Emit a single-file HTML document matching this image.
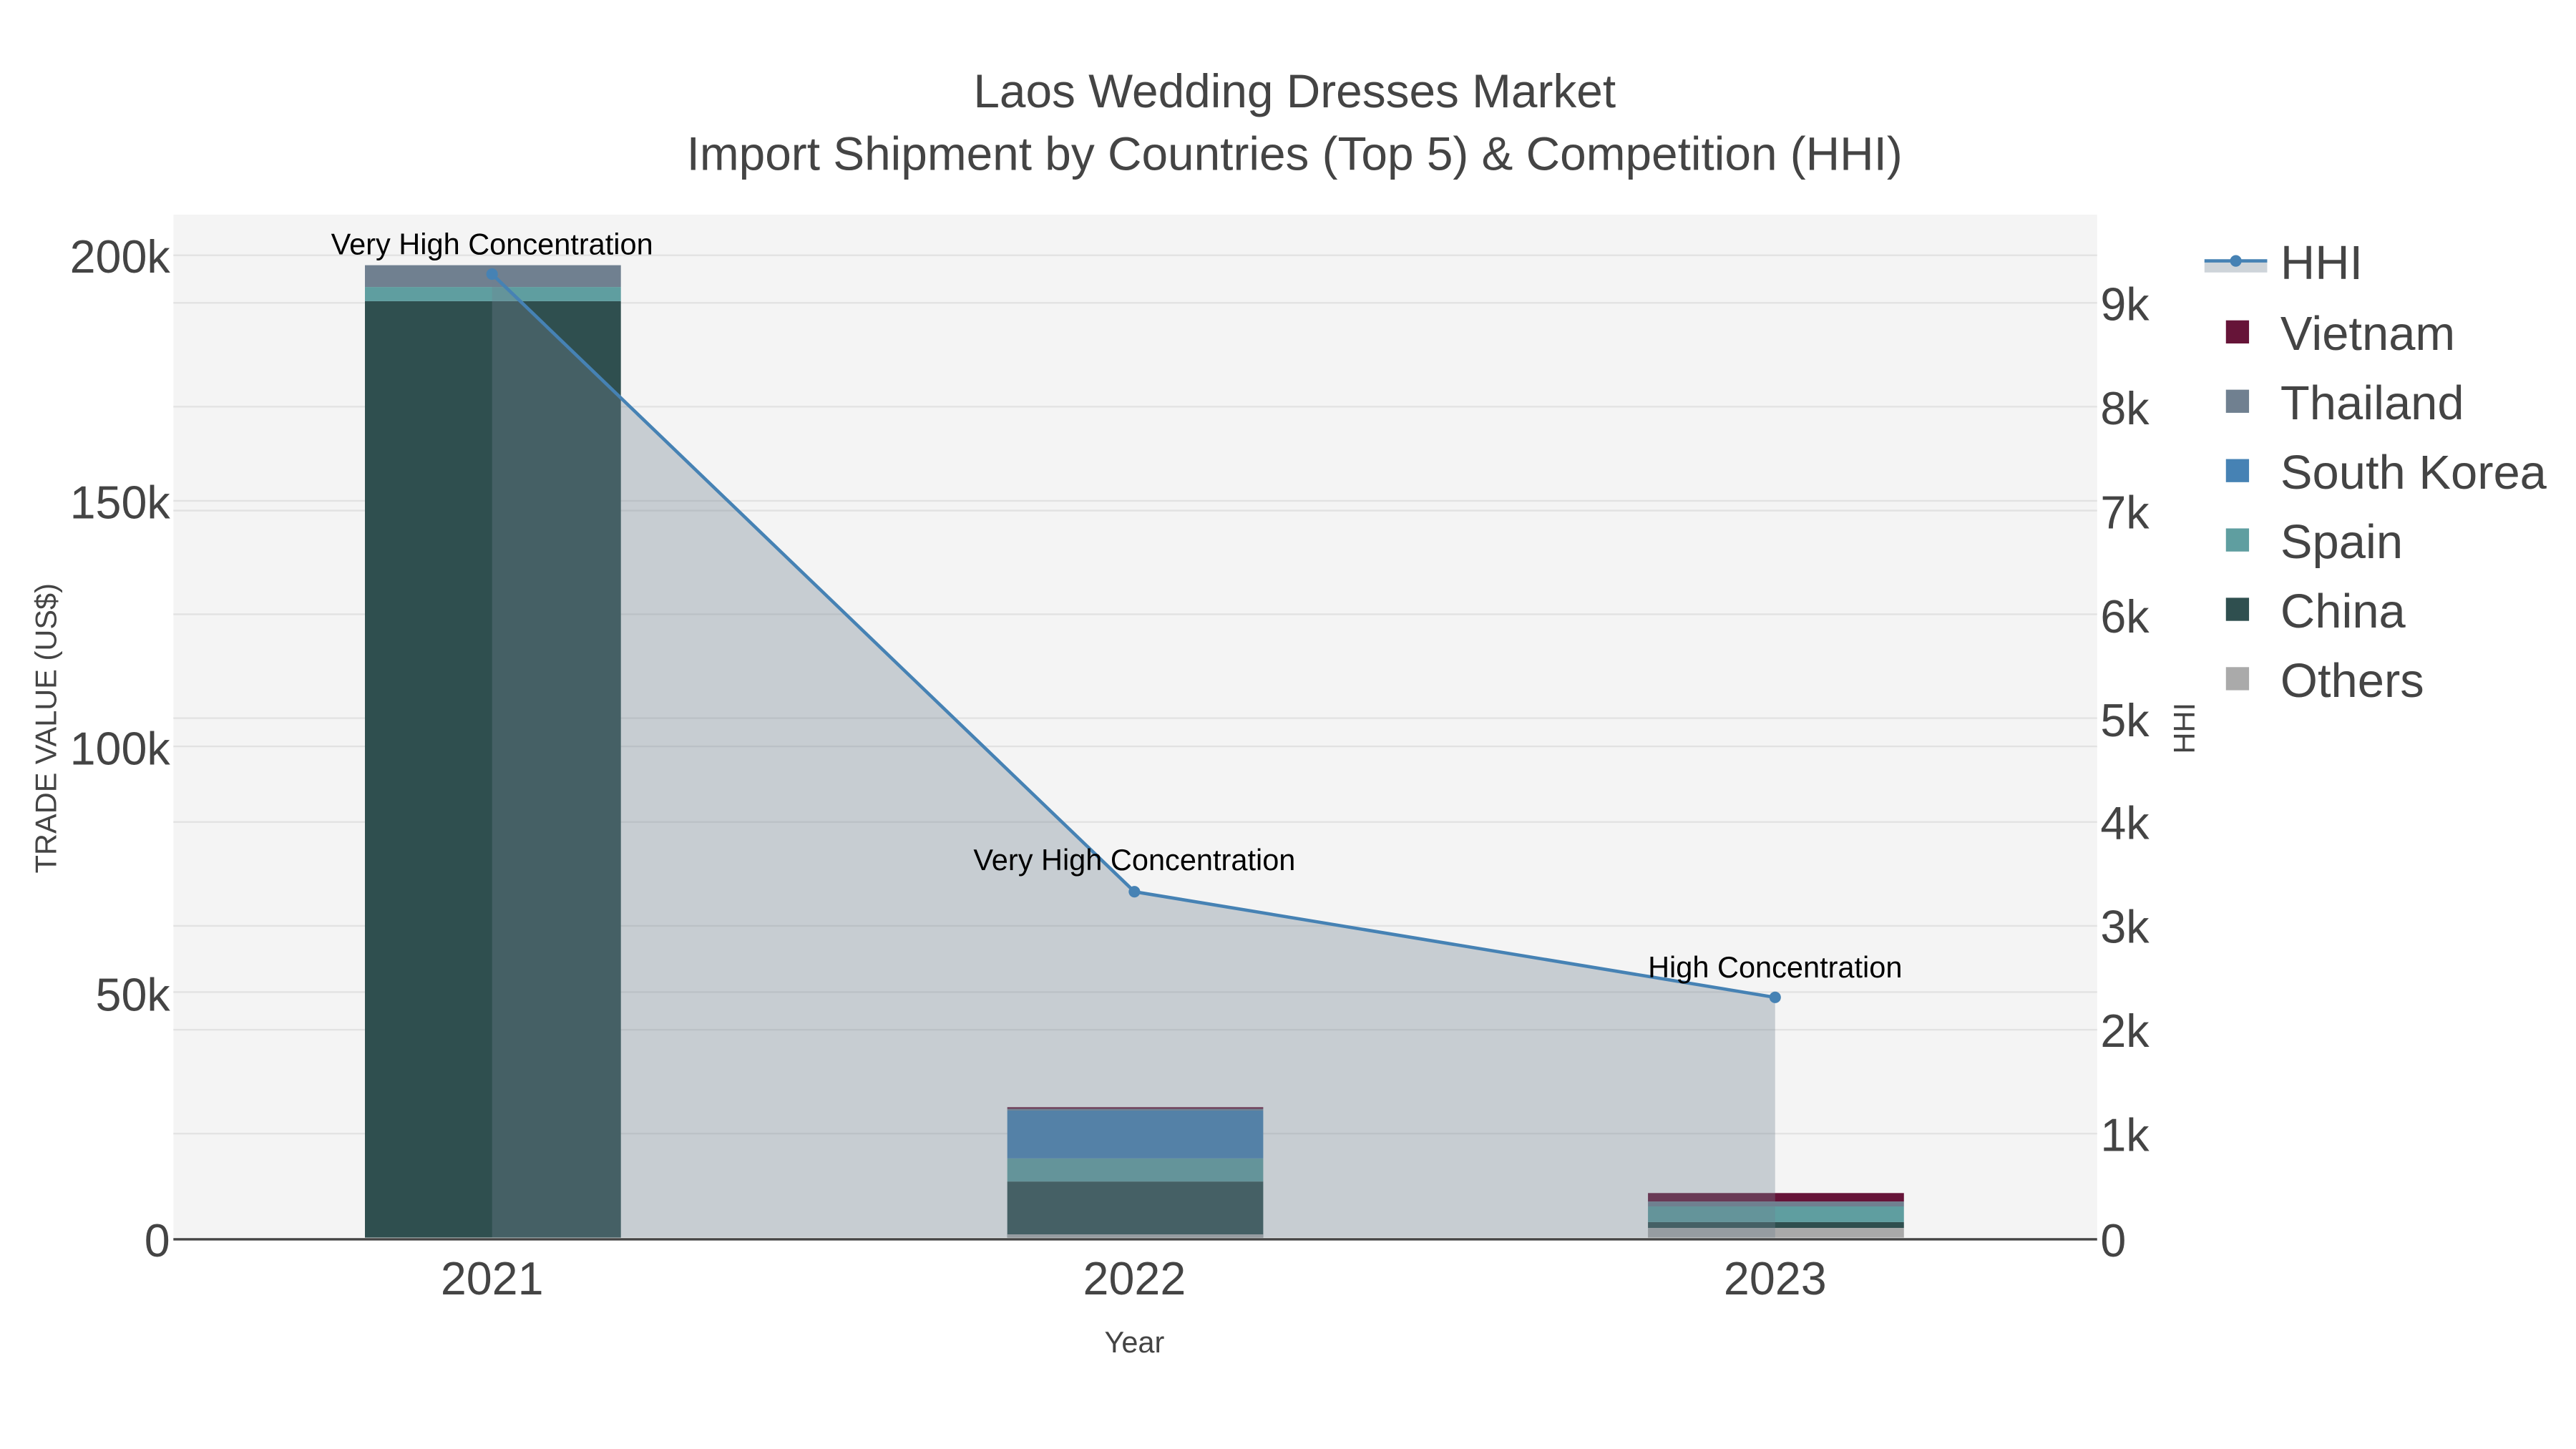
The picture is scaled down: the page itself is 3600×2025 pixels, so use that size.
<!DOCTYPE html>
<html><head><meta charset="utf-8"><style>html,body{margin:0;padding:0;background:#fff}svg{display:block}</style></head>
<body>
<svg width="3600" height="2025" viewBox="0 0 1560 877.5" xmlns="http://www.w3.org/2000/svg" font-family="Liberation Sans, Arial, sans-serif">
<rect width="1560" height="877.5" fill="#fff"/>
<rect x="105" y="130" width="1165" height="619.5" fill="#f4f4f4"/>
<g stroke="#e2e2e2" stroke-width="1">
<line x1="105" x2="1270" y1="154.6" y2="154.6"/><line x1="105" x2="1270" y1="303.3" y2="303.3"/><line x1="105" x2="1270" y1="452" y2="452"/><line x1="105" x2="1270" y1="600.8" y2="600.8"/>
<line x1="105" x2="1270" y1="183.4" y2="183.4"/><line x1="105" x2="1270" y1="246.3" y2="246.3"/><line x1="105" x2="1270" y1="309.2" y2="309.2"/><line x1="105" x2="1270" y1="372" y2="372"/><line x1="105" x2="1270" y1="434.9" y2="434.9"/><line x1="105" x2="1270" y1="497.8" y2="497.8"/><line x1="105" x2="1270" y1="560.7" y2="560.7"/><line x1="105" x2="1270" y1="623.6" y2="623.6"/><line x1="105" x2="1270" y1="686.5" y2="686.5"/>
</g>
<rect x="221" y="182.4" width="155" height="567.1" fill="#2f4f4f"/>
<rect x="221" y="173.8" width="155" height="8.6" fill="#5f9ea0"/>
<rect x="221" y="160.6" width="155" height="13.2" fill="#708090"/>
<rect x="610" y="715.5" width="155" height="34" fill="#2f4f4f"/>
<rect x="610" y="747.5" width="155" height="2" fill="#aaaaaa"/>
<rect x="610" y="701.5" width="155" height="14" fill="#5f9ea0"/>
<rect x="610" y="672.5" width="155" height="29" fill="#4682b4"/>
<rect x="610" y="671.5" width="155" height="1" fill="#708090"/>
<rect x="610" y="670.5" width="155" height="1" fill="#6b1438"/>
<rect x="998" y="743.6" width="155" height="5.9" fill="#aaaaaa"/>
<rect x="998" y="740.1" width="155" height="3.5" fill="#2f4f4f"/>
<rect x="998" y="730.6" width="155" height="9.5" fill="#5f9ea0"/>
<rect x="998" y="727.6" width="155" height="3" fill="#708090"/>
<rect x="998" y="722.5" width="155" height="5.1" fill="#661438"/>
<polygon points="298,166 687,540 1075,604 1075,749.5 298,749.5" fill="#708090" fill-opacity="0.34"/>
<polyline points="298,166 687,540 1075,604" fill="none" stroke="#4682b4" stroke-width="2"/>
<circle cx="298" cy="166" r="3.5" fill="#4682b4"/><circle cx="687" cy="540" r="3.5" fill="#4682b4"/><circle cx="1075" cy="604" r="3.5" fill="#4682b4"/>
<line x1="105" x2="1270" y1="750.5" y2="750.5" stroke="#444" stroke-width="1.5"/>
<g font-size="18" fill="#000" text-anchor="middle">
<text x="298" y="154">Very High Concentration</text>
<text x="687" y="527">Very High Concentration</text>
<text x="1075" y="592">High Concentration</text>
</g>
<g fill="#444" text-anchor="middle" font-size="28.5">
<text x="784" y="65">Laos Wedding Dresses Market</text>
<text x="784" y="103">Import Shipment by Countries (Top 5) &amp; Competition (HHI)</text>
</g>
<g fill="#444" font-size="28" text-anchor="end">
<text x="103" y="165">200k</text><text x="103" y="314">150k</text><text x="103" y="463">100k</text><text x="103" y="612">50k</text><text x="103" y="761">0</text>
</g>
<g fill="#444" font-size="28" text-anchor="start">
<text x="1272" y="194">9k</text><text x="1272" y="257">8k</text><text x="1272" y="320">7k</text><text x="1272" y="383">6k</text><text x="1272" y="446">5k</text><text x="1272" y="508">4k</text><text x="1272" y="571">3k</text><text x="1272" y="634">2k</text><text x="1272" y="697">1k</text><text x="1272" y="761">0</text>
</g>
<g fill="#444" font-size="28" text-anchor="middle">
<text x="298" y="784">2021</text><text x="687" y="784">2022</text><text x="1075" y="784">2023</text>
</g>
<text x="687" y="819" fill="#444" font-size="18" text-anchor="middle">Year</text>
<text transform="translate(34,441) rotate(-90)" fill="#444" font-size="18" text-anchor="middle">TRADE VALUE (US$)</text>
<text transform="translate(1329,441) rotate(-90)" fill="#444" font-size="18" text-anchor="middle">HHI</text>
<rect x="1335" y="158" width="38" height="7" fill="#708090" fill-opacity="0.34"/>
<line x1="1335" x2="1373" y1="158" y2="158" stroke="#4682b4" stroke-width="2"/>
<circle cx="1354" cy="158" r="3.5" fill="#4682b4"/>
<g font-size="29" fill="#444">
<text x="1381" y="169">HHI</text>
<rect x="1348" y="194" width="14" height="14" fill="#661438"/><text x="1381" y="212">Vietnam</text>
<rect x="1348" y="236" width="14" height="14" fill="#708090"/><text x="1381" y="254">Thailand</text>
<rect x="1348" y="278" width="14" height="14" fill="#4682b4"/><text x="1381" y="296">South Korea</text>
<rect x="1348" y="320" width="14" height="14" fill="#5f9ea0"/><text x="1381" y="338">Spain</text>
<rect x="1348" y="362" width="14" height="14" fill="#2f4f4f"/><text x="1381" y="380">China</text>
<rect x="1348" y="404" width="14" height="14" fill="#aaaaaa"/><text x="1381" y="422">Others</text>
</g>
</svg>
</body></html>
